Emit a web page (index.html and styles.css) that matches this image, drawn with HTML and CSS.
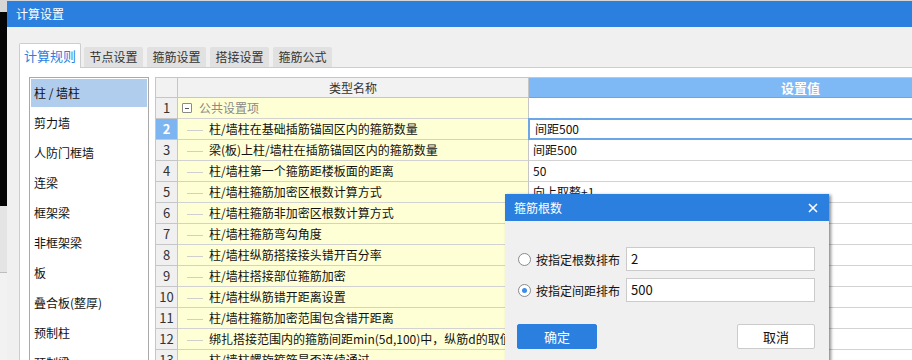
FILE: index.html
```html
<!DOCTYPE html>
<html lang="zh-CN">
<head>
<meta charset="utf-8">
<title>计算设置</title>
<link rel="stylesheet" href="styles.css">
</head>
<body>
<div class="screen">
  <div class="strip"></div>
  <div class="window">
    <div class="titlebar">计算设置</div>
    <div class="main">
      <div class="tabs">
        <div class="tab active">计算规则</div>
        <div class="tab">节点设置</div>
        <div class="tab">箍筋设置</div>
        <div class="tab">搭接设置</div>
        <div class="tab">箍筋公式</div>
      </div>
      <div class="panel">
        <ul class="sidebar">
          <li class="item selected">柱 / 墙柱</li>
          <li class="item">剪力墙</li>
          <li class="item">人防门框墙</li>
          <li class="item">连梁</li>
          <li class="item">框架梁</li>
          <li class="item">非框架梁</li>
          <li class="item">板</li>
          <li class="item">叠合板(整厚)</li>
          <li class="item">预制柱</li>
          <li class="item">预制梁</li>
        </ul>
        <div class="grid">
          <div class="row head">
            <div class="num"></div>
            <div class="name">类型名称</div>
            <div class="val">设置值</div>
          </div>
          <div class="row">
            <div class="num">1</div>
            <div class="name group"><span class="minus"></span>公共设置项</div>
            <div class="val"></div>
          </div>
          <div class="row">
            <div class="num current">2</div>
            <div class="name leaf">柱/墙柱在基础插筋锚固区内的箍筋数量</div>
            <div class="val focused">间距500</div>
          </div>
          <div class="row">
            <div class="num">3</div>
            <div class="name leaf">梁(板)上柱/墙柱在插筋锚固区内的箍筋数量</div>
            <div class="val">间距500</div>
          </div>
          <div class="row">
            <div class="num">4</div>
            <div class="name leaf">柱/墙柱第一个箍筋距楼板面的距离</div>
            <div class="val">50</div>
          </div>
          <div class="row">
            <div class="num">5</div>
            <div class="name leaf">柱/墙柱箍筋加密区根数计算方式</div>
            <div class="val">向上取整+1</div>
          </div>
          <div class="row">
            <div class="num">6</div>
            <div class="name leaf">柱/墙柱箍筋非加密区根数计算方式</div>
            <div class="val"></div>
          </div>
          <div class="row">
            <div class="num">7</div>
            <div class="name leaf">柱/墙柱箍筋弯勾角度</div>
            <div class="val"></div>
          </div>
          <div class="row">
            <div class="num">8</div>
            <div class="name leaf">柱/墙柱纵筋搭接接头错开百分率</div>
            <div class="val"></div>
          </div>
          <div class="row">
            <div class="num">9</div>
            <div class="name leaf">柱/墙柱搭接部位箍筋加密</div>
            <div class="val"></div>
          </div>
          <div class="row">
            <div class="num">10</div>
            <div class="name leaf">柱/墙柱纵筋错开距离设置</div>
            <div class="val"></div>
          </div>
          <div class="row">
            <div class="num">11</div>
            <div class="name leaf">柱/墙柱箍筋加密范围包含错开距离</div>
            <div class="val"></div>
          </div>
          <div class="row">
            <div class="num">12</div>
            <div class="name leaf">绑扎搭接范围内的箍筋间距min(5d,100)中，纵筋d的取值</div>
            <div class="val"></div>
          </div>
          <div class="row">
            <div class="num">13</div>
            <div class="name leaf">柱/墙柱螺旋箍筋是否连续通过</div>
            <div class="val"></div>
          </div>
        </div>
      </div>
    </div>
  </div>

  <div class="dialog">
    <div class="dlg-title">
      <span>箍筋根数</span>
      <svg class="close" width="10" height="10" viewBox="0 0 10 10"><path d="M1 1L9 9M9 1L1 9" stroke="#fff" stroke-width="1.6" fill="none"/></svg>
    </div>
    <div class="dlg-body">
      <div class="opt">
        <span class="radio"></span>
        <span class="opt-label">按指定根数排布</span>
        <div class="input">2</div>
      </div>
      <div class="opt">
        <span class="radio checked"></span>
        <span class="opt-label">按指定间距排布</span>
        <div class="input">500</div>
      </div>
      <div class="buttons">
        <div class="btn primary">确定</div>
        <div class="btn">取消</div>
      </div>
    </div>
  </div>
</div>
</body>
</html>
```
FILE: styles.css
```css
* { box-sizing: border-box; }
html, body {
  margin: 0;
  width: 912px;
  height: 360px;
  overflow: hidden;
  background: #d6d6d6;
  font-family: "Noto Sans CJK SC", "Microsoft YaHei", sans-serif;
  font-size: 12px;
  color: #1a1a1a;
}
.screen {
  position: relative;
  display: flex;
  width: 912px;
  height: 360px;
  padding-top: 1px;
}
.strip {
  width: 7px;
  flex: none;
  background: linear-gradient(to bottom, #d6d6d6 0, #d6d6d6 11px, #050505 11px, #050505 205px, #e4e4e4 205px, #e4e4e4 271px, #bdbdbd 271px, #bdbdbd 272px, #f2f2f2 272px);
}
.window {
  flex: 1;
  display: flex;
  flex-direction: column;
  background: #f0f0f0;
  min-width: 0;
}
.titlebar {
  height: 26px;
  flex: none;
  background: #2b7fde;
  color: #fff;
  font-size: 12px;
  line-height: 26px;
  padding-left: 9px;
}
.main {
  flex: 1;
  display: flex;
  flex-direction: column;
  padding: 16px 0 0 12px;
  min-height: 0;
}
.tabs {
  display: flex;
  align-items: flex-end;
  height: 24px;
  flex: none;
  position: relative;
  z-index: 1;
}
.tab {
  width: 59px;
  height: 20px;
  margin-left: 4px;
  background: #e1e1e1;
  color: #333;
  font-size: 12px;
  line-height: 20px;
  text-align: center;
  border-radius: 2px 2px 0 0;
}
.tab.active {
  width: 62px;
  height: 25px;
  margin-left: 0;
  margin-right: -1px;
  margin-bottom: -1px;
  background: #fff;
  border: 1px solid #cdcdcd;
  border-bottom: none;
  color: #2b7fde;
  font-size: 13px;
  line-height: 24px;
}
.panel {
  flex: 1;
  display: flex;
  gap: 6px;
  background: #fff;
  border-top: 1px solid #cdcdcd;
  border-left: 1px solid #cdcdcd;
  padding: 9px 0 0 9px;
  overflow: hidden;
  min-height: 0;
}
.sidebar {
  list-style: none;
  margin: 0;
  width: 120px;
  flex: none;
  border: 1px solid #a9a9a9;
  border-bottom: none;
  padding: 1px;
}
.item {
  height: 28px;
  margin-bottom: 2px;
  line-height: 28px;
  padding-left: 3px;
  font-size: 12px;
  color: #111;
  white-space: nowrap;
}
.item.selected { background: #b1cdee; }

.grid {
  flex: 1;
  min-width: 0;
  border-top: 1px solid #c6c6c6;
  border-left: 1px solid #c6c6c6;
  overflow: hidden;
}
.row {
  display: grid;
  grid-template-columns: 22px 351px 560px;
  height: 21px;
}
.row > div {
  border-bottom: 1px solid #d2d2d2;
  line-height: 20px;
  white-space: nowrap;
  overflow: hidden;
}
.num {
  background: #f0f0f0;
  border-right: 1px solid #c6c6c6;
  text-align: center;
  color: #333;
  font-size: 13px;
  border-bottom-color: #c6c6c6 !important;
}
.num.current {
  background: #7cb5ef;
  color: #fff;
  font-weight: bold;
}
.name {
  background: #ffffd5;
  border-right: 1px solid #c6c6c6;
  color: #111;
}
.val {
  background: #fff;
  padding-left: 4px;
  color: #111;
}
.val.focused {
  position: relative;
  padding-left: 6px;
  overflow: visible !important;
}
.val.focused::after {
  content: "";
  position: absolute;
  left: -1px;
  top: -1px;
  right: 0;
  bottom: -1px;
  border: 2px solid #6ba7e7;
}
.row.head { height: 20px; }
.row.head > div {
  line-height: 19px;
  background: #f2f2f2;
  border-bottom-color: #c6c6c6;
}
.row.head .name {
  text-align: center;
  color: #333;
  font-size: 12px;
}
.row.head .val {
  background: #7fb9f5;
  border-bottom: 1px solid #6aa6e6;
  color: #fff;
  font-size: 13px;
  font-weight: bold;
  padding-left: 252px;
}
.name.group {
  color: #8a8a8a;
  padding-left: 4px;
  display: flex;
  align-items: center;
}
.minus {
  width: 10px;
  height: 10px;
  border: 1px solid #8a8a8a;
  border-radius: 1px;
  margin-right: 7px;
  position: relative;
  flex: none;
  background: #fff;
}
.minus::after {
  content: "";
  position: absolute;
  left: 2px;
  right: 2px;
  top: 3.5px;
  height: 1px;
  background: #555;
}
.name.leaf::before {
  content: "";
  display: inline-block;
  width: 16px;
  height: 1px;
  background: #cfcfcf;
  margin: 0 6px 0 9px;
  vertical-align: middle;
}

.dialog {
  position: absolute;
  left: 505px;
  top: 194px;
  width: 324px;
  height: 190px;
  background: #f0f0f0;
  box-shadow: 2px 1px 3px rgba(0,0,0,0.45);
}
.dlg-title {
  height: 27px;
  background: #2b7fde;
  color: #fff;
  font-size: 12px;
  line-height: 27px;
  padding: 0 11px 0 9px;
  display: flex;
  align-items: center;
  justify-content: space-between;
}
.dlg-body {
  padding: 26px 14px 0 13px;
}
.opt {
  display: flex;
  align-items: center;
  height: 24px;
  margin-bottom: 7px;
}
.radio {
  width: 13px;
  height: 13px;
  border-radius: 50%;
  border: 1px solid #8a8a8a;
  background: #fff;
  flex: none;
  margin-right: 5px;
  position: relative;
}
.radio.checked::after {
  content: "";
  position: absolute;
  left: 3px;
  top: 3px;
  width: 5px;
  height: 5px;
  border-radius: 50%;
  background: #3b8ee8;
}
.opt-label {
  width: 90px;
  color: #111;
  font-size: 12px;
  white-space: nowrap;
}
.input {
  flex: 1;
  height: 24px;
  background: #fff;
  border: 1px solid #cbcbcb;
  padding-left: 4px;
  line-height: 22px;
  font-size: 13px;
  color: #111;
}
.buttons {
  display: flex;
  justify-content: space-between;
  margin-top: 22px;
}
.btn {
  width: 78px;
  height: 25px;
  line-height: 23px;
  text-align: center;
  border: 1px solid #cbcbcb;
  border-radius: 2px;
  background: #fff;
  font-size: 13px;
  color: #111;
}
.btn.primary {
  width: 80px;
  margin-left: -1px;
  background: #2b7fde;
  border-color: #2b7fde;
  color: #fff;
}
```
